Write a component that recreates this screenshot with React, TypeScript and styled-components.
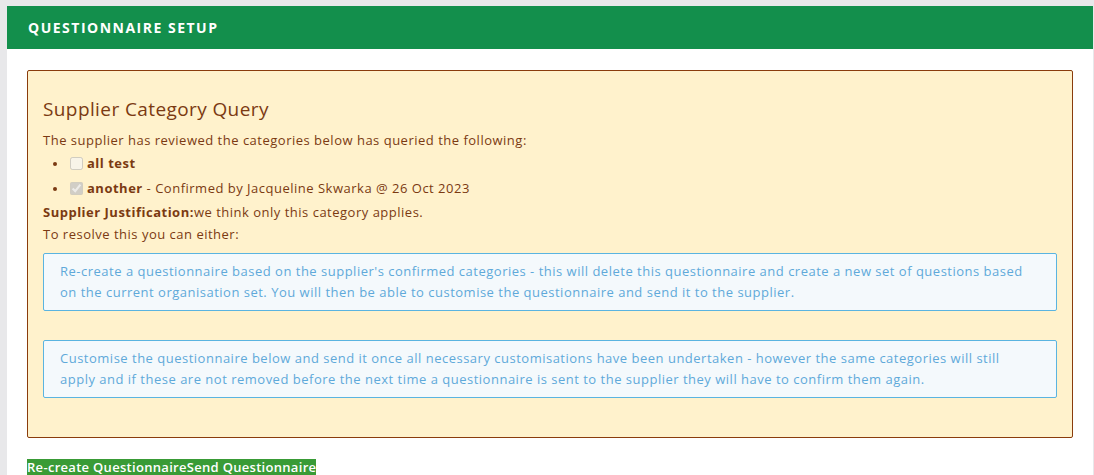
import React from "react";
import styled, { createGlobalStyle } from "styled-components";

const GlobalStyle = createGlobalStyle`
  html, body {
    margin: 0;
    padding: 0;
    background: #e8e8ea;
    font-family: "Open Sans", "Liberation Sans", sans-serif;
  }
`;

const categories = [
  { name: "all test", checked: false, note: "" },
  { name: "another", checked: true, note: " - Confirmed by Jacqueline Skwarka @ 26 Oct 2023" },
];

const options = [
  "Re-create a questionnaire based on the supplier's confirmed categories - this will delete this questionnaire and create a new set of questions based on the current organisation set. You will then be able to customise the questionnaire and send it to the supplier.",
  "Customise the questionnaire below and send it once all necessary customisations have been undertaken - however the same categories will still apply and if these are not removed before the next time a questionnaire is sent to the supplier they will have to confirm them again.",
];

export default function App() {
  return (
    <>
      <GlobalStyle />
      <Page>
        <Panel>
          <Header>Questionnaire Setup</Header>
          <Body>
            <Alert>
              <Title>Supplier Category Query</Title>
              <Line>The supplier has reviewed the categories below has queried the following:</Line>
              <List>
                {categories.map((c) => (
                  <Item key={c.name}>
                    <Check type="checkbox" checked={c.checked} disabled readOnly />
                    <b>{c.name}</b>
                    {c.note}
                  </Item>
                ))}
              </List>
              <Line>
                <b>Supplier Justification:</b>we think only this category applies.
              </Line>
              <Line>To resolve this you can either:</Line>
              <Options>
                {options.map((o, i) => (
                  <Info key={i}>{o}</Info>
                ))}
              </Options>
            </Alert>
            <Actions>
              <ActionBtn>Re-create Questionnaire</ActionBtn>
              <ActionBtn>Send Questionnaire</ActionBtn>
            </Actions>
          </Body>
        </Panel>
      </Page>
    </>
  );
}

const Page = styled.div`
  padding: 6px 1px 0 7px;
`;

const Panel = styled.div`
  background: #ffffff;
  height: 469px;
  overflow: hidden;
`;

const Header = styled.div`
  height: 43px;
  background: #138f4c;
  color: #ffffff;
  display: flex;
  align-items: center;
  padding-left: 21px;
  font-size: 14px;
  font-weight: 700;
  letter-spacing: 1.5px;
  text-transform: uppercase;
`;

const Body = styled.div`
  padding: 21px 20px 0 20px;
`;

const Alert = styled.div`
  background: #fff2cc;
  border: 1px solid #8a3c0c;
  border-radius: 2px;
  padding: 23px 15px 39px 15px;
  color: #7b3a12;
  font-size: 13px;
  letter-spacing: 0.5px;
`;

const Title = styled.h3`
  margin: 0 0 5px 0;
  font-size: 19px;
  font-weight: 400;
  line-height: 30px;
  letter-spacing: 0.4px;
`;

const Line = styled.div`
  line-height: 22px;

  b {
    font-weight: 700;
  }
`;

const List = styled.ul`
  margin: 0;
  padding-left: 27px;
  list-style: none;
`;

const Item = styled.li`
  position: relative;
  line-height: 25px;
  white-space: pre;

  &::before {
    content: "";
    position: absolute;
    left: -17px;
    top: 11px;
    width: 4px;
    height: 4px;
    border-radius: 50%;
    background: #7b3a12;
  }

  b {
    font-weight: 700;
  }
`;

const Check = styled.input`
  width: 13px;
  height: 13px;
  margin: 0 4px 0 0;
  vertical-align: -2px;
`;

const Options = styled.div`
  margin-top: 8px;
  display: flex;
  flex-direction: column;
  gap: 29px;
`;

const Info = styled.div`
  background: #f4f9fc;
  border: 1px solid #5ab4e0;
  border-radius: 2px;
  padding: 7px 22px 7px 16px;
  color: #5fa9da;
  line-height: 21px;
`;

const Actions = styled.div`
  margin-top: 21px;
  display: flex;
`;

const ActionBtn = styled.span`
  background: #399b36;
  color: #ffffff;
  font-size: 13px;
  font-weight: 600;
  line-height: 16px;
  letter-spacing: 0.3px;
`;
